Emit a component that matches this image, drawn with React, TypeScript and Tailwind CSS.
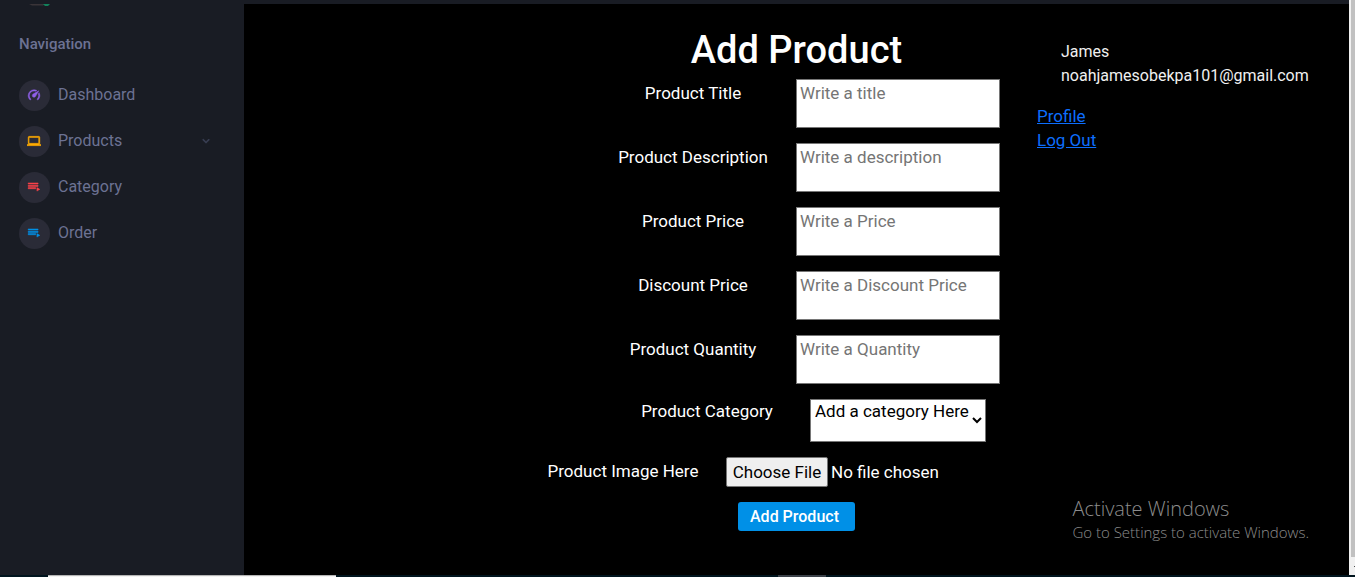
import type { ReactNode } from 'react';

const icons = {
  gauge:
    'M12,16A3,3 0 0,1 9,13C9,11.88 9.61,10.9 10.5,10.39L20.21,4.77L14.68,14.35C14.18,15.33 13.17,16 12,16M12,3C13.81,3 15.5,3.5 16.97,4.32L14.87,5.53C14,5.19 13,5 12,5A8,8 0 0,0 4,13C4,15.21 4.89,17.21 6.34,18.65H6.35C6.74,19.04 6.74,19.67 6.35,20.06C5.96,20.45 5.32,20.45 4.93,20.07V20.07C3.12,18.26 2,15.76 2,13A10,10 0 0,1 12,3M22,13C22,15.76 20.88,18.26 19.07,20.07V20.07C18.68,20.45 18.05,20.45 17.66,20.06C17.27,19.67 17.27,19.04 17.66,18.65V18.65C19.11,17.2 20,15.21 20,13C20,12 19.81,11 19.46,10.1L20.67,8C21.5,9.5 22,11.18 22,13Z',
  laptop:
    'M4,6H20V16H4M20,18A2,2 0 0,0 22,16V6C22,4.89 21.1,4 20,4H4C2.89,4 2,4.89 2,6V16A2,2 0 0,0 4,18H0V20H24V18H20Z',
  playlist: 'M19,9H2V11H19V9M19,5H2V7H19V5M2,15H15V13H2V15M17,13V19L22,16L17,13Z',
  chevron: 'M7.41,8.58L12,13.17L16.59,8.58L18,10L12,16L6,10L7.41,8.58Z',
};

function Icon({ path, className }: { path: string; className: string }) {
  return (
    <svg
      viewBox="0 0 24 24"
      fill="currentColor"
      stroke="currentColor"
      strokeWidth="0.8"
      aria-hidden="true"
      className={className}
    >
      <path d={path} />
    </svg>
  );
}

const navItems = [
  { label: 'Dashboard', icon: icons.gauge, color: 'text-[#8f5fe8]', expandable: false },
  { label: 'Products', icon: icons.laptop, color: 'text-[#ffab00]', expandable: true },
  { label: 'Category', icon: icons.playlist, color: 'text-[#fc424a]', expandable: false },
  { label: 'Order', icon: icons.playlist, color: 'text-[#0090e7]', expandable: false },
];

const textFields = [
  { id: 'title', label: 'Product Title', placeholder: 'Write a title' },
  { id: 'description', label: 'Product Description', placeholder: 'Write a description' },
  { id: 'price', label: 'Product Price', placeholder: 'Write a Price' },
  { id: 'discount', label: 'Discount Price', placeholder: 'Write a Discount Price' },
  { id: 'quantity', label: 'Product Quantity', placeholder: 'Write a Quantity' },
];

function Sidebar() {
  return (
    <aside className="w-[244px] shrink-0 bg-[#191c24] text-[#6c7293]">
      <div className="flex h-8 items-start pl-7">
        <svg viewBox="0 0 24 6" className="h-[6px] w-6" aria-hidden="true">
          <path d="M1 4h16l-2 1.5H4z" fill="#3a3438" />
          <path d="M15 4h7l-2 2h-3z" fill="#12805a" />
        </svg>
      </div>
      <h2 className="pl-[19px] text-[15px] leading-6 font-medium">Navigation</h2>
      <nav className="mt-4">
        {navItems.map((item) => (
          <a key={item.label} href="#" className="flex h-[46px] items-center pr-[31px] pl-[19px] text-base">
            <span className="mr-2 flex size-[31px] items-center justify-center rounded-full bg-[#2a2b37] pr-px pb-px">
              <Icon path={item.icon} className={`size-[14px] ${item.color}`} />
            </span>
            <span className="flex-1">{item.label}</span>
            {item.expandable && <Icon path={icons.chevron} className="size-[14px] text-[#3c4258]" />}
          </a>
        ))}
      </nav>
    </aside>
  );
}

function Row({ id, label, children }: { id: string; label: string; children: ReactNode }) {
  return (
    <div className="mb-[15px] flex items-start justify-center">
      <label
        htmlFor={id}
        className={`mr-[3px] w-[200px] text-center ${id === 'category' ? 'pt-0' : 'pt-[2px]'}`}
      >
        {label}
      </label>
      {children}
    </div>
  );
}

function ProductForm() {
  return (
    <form className="col-start-1 row-start-1 pt-6 text-[17px] leading-6" onSubmit={(e) => e.preventDefault()}>
      <h1 className="mb-[7px] text-center text-[38px] leading-[44px] font-medium">Add Product</h1>
      {textFields.map((field) => (
        <Row key={field.id} id={field.id} label={field.label}>
          <textarea
            id={field.id}
            placeholder={field.placeholder}
            className="h-[49px] w-[204px] resize-none border border-[#767676] bg-white px-[3px] py-[1px] text-black placeholder:text-[#757575]"
          />
        </Row>
      ))}
      <Row id="category" label="Product Category">
        <select
          id="category"
          className="h-[43px] w-[176px] border border-[#767676] bg-white pb-5 text-black"
        >
          <option>Add a category Here</option>
        </select>
      </Row>
      <Row id="image" label="Product Image Here">
        <input
          id="image"
          type="file"
          className="h-[30px] w-[344px] file:mr-[3px] file:h-[30px] file:w-[102px] file:rounded-[2px] file:border file:border-solid file:border-[#767676] file:bg-[#efefef] file:text-black"
        />
      </Row>
      <div className="flex justify-center">
        <button type="submit" className="h-[29px] w-[117px] rounded-[3px] bg-[#0090e7] px-3 text-left text-base font-medium">
          Add Product
        </button>
      </div>
    </form>
  );
}

function Account() {
  return (
    <div className="col-start-1 row-start-1 w-[312px] self-start justify-self-end pt-9 text-[17px] leading-6">
      <div className="mb-4 pl-6 text-base leading-6 text-[#f0f0f0]">
        <p>James</p>
        <p>noahjamesobekpa101@gmail.com</p>
      </div>
      <ul className="text-[#0d6efd] underline">
        <li><a href="#">Profile</a></li>
        <li><a href="#">Log Out</a></li>
      </ul>
    </div>
  );
}

export default function App() {
  return (
    <div className="flex min-h-screen flex-col bg-black font-['Roboto','Liberation_Sans',sans-serif] text-white">
      <div className="flex flex-1">
        <Sidebar />
        <main className="relative grid flex-1 border-t-4 border-[#191c24]">
          <ProductForm />
          <Account />
          <div className="pointer-events-none absolute right-10 bottom-8 font-['Open_Sans','Noto_Sans',sans-serif] text-[#8c8c8c]">
            <p className="text-xl leading-6 font-light">Activate Windows</p>
            <p className="text-[15px] leading-[22px] font-light">Go to Settings to activate Windows.</p>
          </div>
        </main>
        <div className="flex w-[6px] flex-col bg-[#f1f1f1] pl-[2px]">
          <div className="flex-1 bg-[#c1c1c1]" />
          <div className="flex h-[18px] items-center justify-end">
            <span className="h-px w-px bg-[#505050]" />
          </div>
        </div>
      </div>
      <footer className="flex h-[2px] bg-[#00141e] pl-12">
        <div className="w-[288px] border-t border-[#b5b5b5] bg-[#f3f3f3]" />
        <div className="ml-[442px] w-12 bg-[#3a4048]" />
      </footer>
    </div>
  );
}
